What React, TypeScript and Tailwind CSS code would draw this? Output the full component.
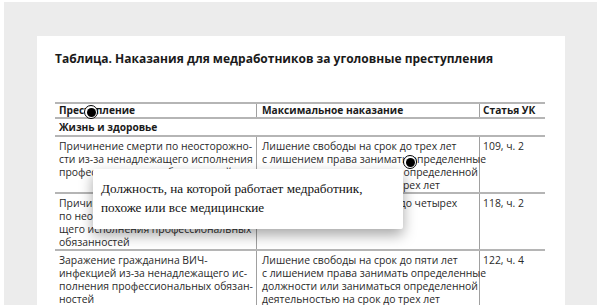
import React from "react";

const sans = { fontFamily: '"Open Sans", "DejaVu Sans", sans-serif' };
const serif = { fontFamily: '"Liberation Serif", "DejaVu Serif", serif' };

function Marker({ className }: { className: string }) {
  return (
    <div
      className={`absolute w-[14px] h-[14px] rounded-full border border-black bg-white flex items-center justify-center ${className}`}
    >
      <div className="w-[9px] h-[9px] rounded-full bg-black" />
    </div>
  );
}

const rows = [
  {
    a: ["Причинение смерти по неосторожно-", "сти из-за ненадлежащего исполнения", "профессиональных обязанностей"],
    b: ["Лишение свободы на срок до трех лет", "с лишением права занимать определенные", "должности или заниматься определенной", "деятельностью на срок до трех лет"],
    c: "109, ч. 2",
  },
  {
    a: ["Причинение тяжкого вреда здоровью", "по неосторожности из-за ненадлежа-", "щего исполнения профессиональных", "обязанностей"],
    b: ["Лишение свободы на срок до четырех", "лет"],
    c: "118, ч. 2",
  },
  {
    a: ["Заражение гражданина ВИЧ-", "инфекцией из-за ненадлежащего ис-", "полнения профессиональных обязан-", "ностей"],
    b: ["Лишение свободы на срок до пяти лет", "с лишением права занимать определенные", "должности или заниматься определенной", "деятельностью на срок до трех лет"],
    c: "122, ч. 4",
  },
];

export default function App() {
  return (
    <div className="w-[600px] h-[305px] bg-white pt-[2px] pl-[4px] pr-[3px] overflow-hidden">
      <div className="h-[303px] bg-[#ececec] pt-[34px] pl-[33px] pr-[32px]">
        <div className="relative h-[269px] bg-white pl-[18px] pt-[15px] overflow-hidden" style={sans}>
          <div className="text-[12px] font-bold text-[#1a1a1a] leading-[16px] whitespace-nowrap">
            Таблица. Наказания для медработников за уголовные преступления
          </div>
          <div className="mt-[35px] w-[490px] text-[10.4px] text-[#2a2a2a] leading-[13px]">
            <div className="grid grid-cols-[202px_223px_65px] border-t-2 border-b-2 border-[#b5b5b5] text-[10.2px]">
              <div className="font-bold text-[#1a1a1a] pl-[4px] border-r border-[#a0a0a0]">Преступление</div>
              <div className="font-bold text-[#1a1a1a] pl-[5px] border-r border-[#a0a0a0]">Максимальное наказание</div>
              <div className="font-bold text-[#1a1a1a] pl-[3px]">Статья УК</div>
            </div>
            <div className="font-bold text-[10.2px] text-[#1a1a1a] pl-[4px] pt-[2px] pb-[1px] border-b-2 border-[#b5b5b5]">Жизнь и здоровье</div>
            {rows.map((r, i) => (
              <div key={i} className="grid grid-cols-[202px_223px_65px] border-b-2 border-[#b5b5b5]">
                <div className="pl-[4px] pt-[3px] border-r border-[#a0a0a0] whitespace-nowrap">
                  {r.a.map((l, j) => (
                    <div key={j}>{l}</div>
                  ))}
                </div>
                <div className="pl-[5px] pt-[3px] border-r border-[#a0a0a0] whitespace-nowrap">
                  {r.b.map((l, j) => (
                    <div key={j}>{l}</div>
                  ))}
                </div>
                <div className="pl-[3px] pt-[3px]">{r.c}</div>
              </div>
            ))}
          </div>

          <Marker className="left-[47px] top-[69px]" />
          <Marker className="left-[366px] top-[119px]" />

          <div
            className="absolute left-[56px] top-[133px] w-[310px] h-[60px] bg-white rounded-[2px] shadow-[0_6px_14px_rgba(0,0,0,0.35)] pl-[8px] pt-[10px] text-[13.2px] leading-[19px] text-[#111]"
            style={serif}
          >
            <div>Должность, на которой работает медработник,</div>
            <div>похоже или все медицинские</div>
          </div>
        </div>
      </div>
    </div>
  );
}
